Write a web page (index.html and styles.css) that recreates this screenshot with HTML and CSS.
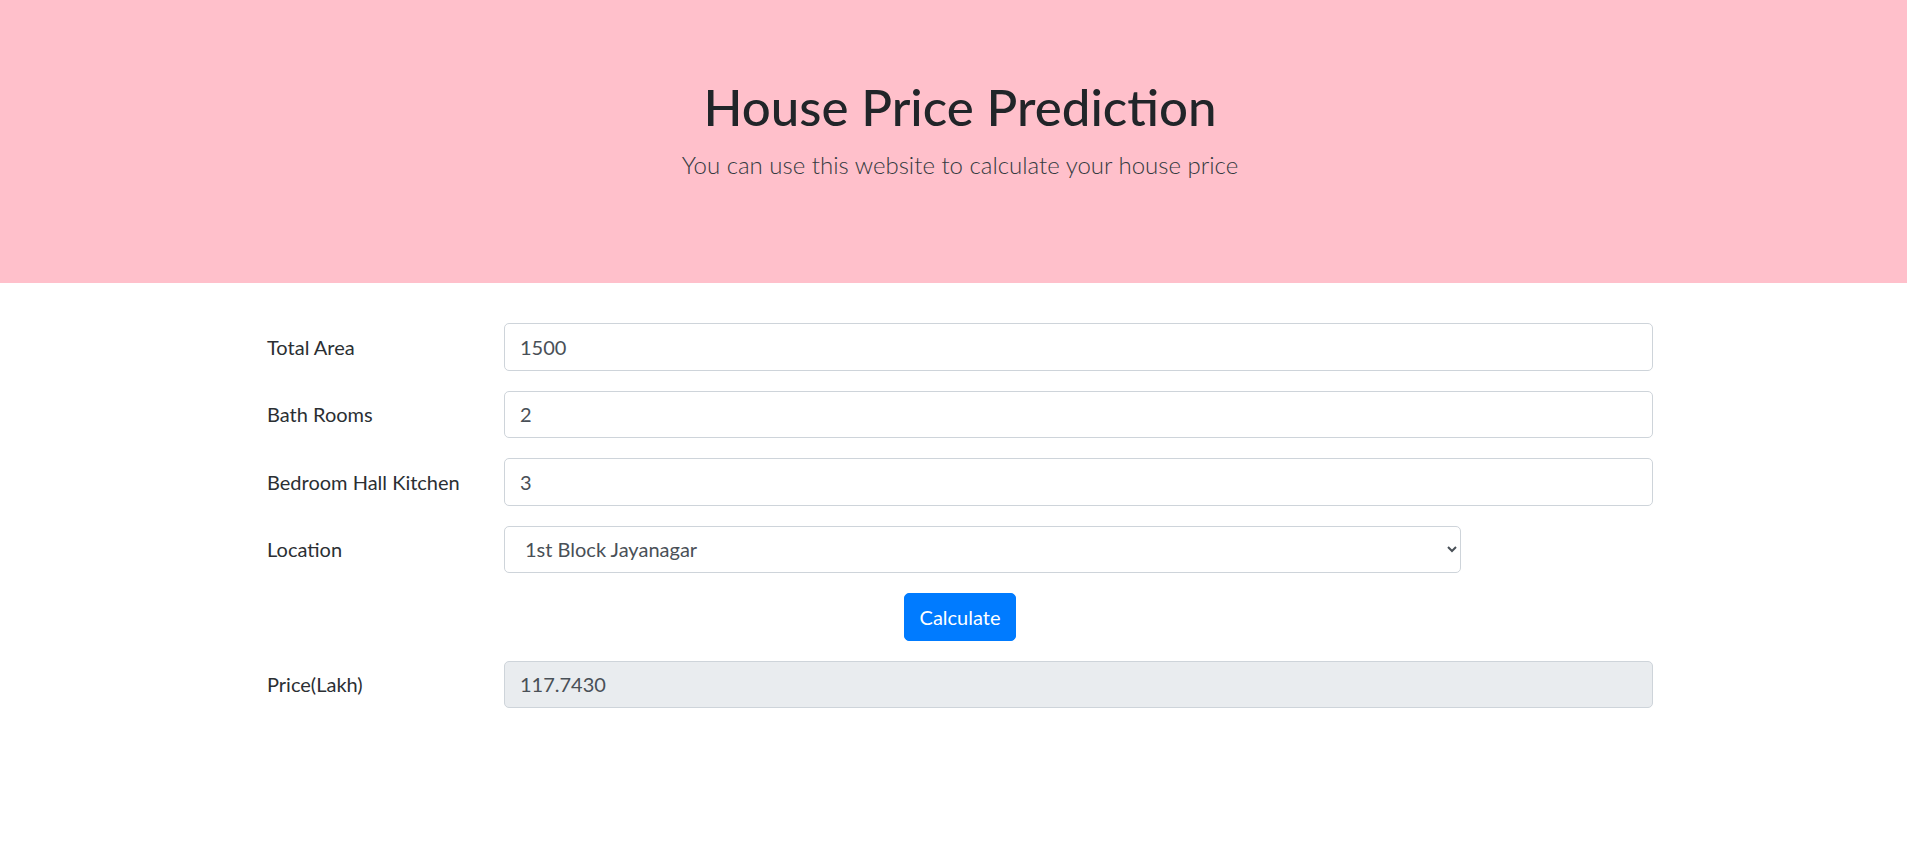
FILE: index.html
```html
<!DOCTYPE html>
<html lang="en">
<head>
<meta charset="utf-8">
<title>House Price Prediction</title>
<link rel="stylesheet" href="styles.css">
</head>
<body>
<header class="hero">
  <h1 class="hero-title">House Price Prediction</h1>
  <p class="hero-lead">You can use this website to calculate your house price</p>
</header>
<main class="container">
  <form class="form">
    <div class="row">
      <label class="label" for="area">Total Area</label>
      <div class="field"><input class="control" id="area" type="text" value="1500"></div>
    </div>
    <div class="row">
      <label class="label" for="bath">Bath Rooms</label>
      <div class="field"><input class="control" id="bath" type="text" value="2"></div>
    </div>
    <div class="row">
      <label class="label" for="bhk">Bedroom Hall Kitchen</label>
      <div class="field"><input class="control" id="bhk" type="text" value="3"></div>
    </div>
    <div class="row">
      <label class="label" for="loc">Location</label>
      <div class="field"><select class="control select" id="loc"><option>1st Block Jayanagar</option></select></div>
    </div>
    <div class="row-center">
      <button class="btn" type="button">Calculate</button>
    </div>
    <div class="row">
      <label class="label" for="price">Price(Lakh)</label>
      <div class="field"><input class="control readonly" id="price" type="text" value="117.7430" readonly></div>
    </div>
  </form>
</main>
</body>
</html>
```

FILE: styles.css
```css
html, body {
  margin: 0;
  padding: 0;
  background: #ffffff;
}
body {
  font-family: Lato, "Noto Sans", "Liberation Sans", sans-serif;
  color: #212529;
  font-size: 20px;
  line-height: 1.5;
}
.hero {
  background: #ffc0cb;
  height: 283px;
  box-sizing: border-box;
  padding: 77px 0 0 13px;
  text-align: center;
}
.hero-title {
  margin: 0 0 10px;
  font-size: 51px;
  line-height: 60px;
  font-weight: 500;
  color: #212529;
}
.hero-lead {
  margin: 0;
  font-size: 24px;
  line-height: 36px;
  font-weight: 300;
  color: #343a40;
}
.container {
  width: 1424px;
  margin: 40px 0 0 248px;
}
.row {
  display: grid;
  grid-template-columns: 237px 1fr;
  align-items: center;
  margin-bottom: 20px;
}
.label {
  padding-left: 19px;
  font-size: 20px;
  color: #2b2f33;
}
.field {
  padding: 0 19px;
}
.control {
  display: block;
  box-sizing: border-box;
  width: 100%;
  height: 47.5px;
  padding: 0 15px;
  font-family: inherit;
  font-size: 20px;
  color: #495057;
  background: #ffffff;
  border: 1px solid #ced4da;
  border-radius: 5px;
  outline: none;
}
.select {
  width: 957px;
  padding-left: 16px;
}
.readonly {
  background: #e9ecef;
}
.row-center {
  display: flex;
  justify-content: center;
  margin-bottom: 20px;
}
.btn {
  font-family: inherit;
  font-size: 20px;
  line-height: 30px;
  padding: 8px 15px;
  height: 47.5px;
  color: #ffffff;
  background: #007bff;
  border: 1px solid #007bff;
  border-radius: 5px;
}
```
